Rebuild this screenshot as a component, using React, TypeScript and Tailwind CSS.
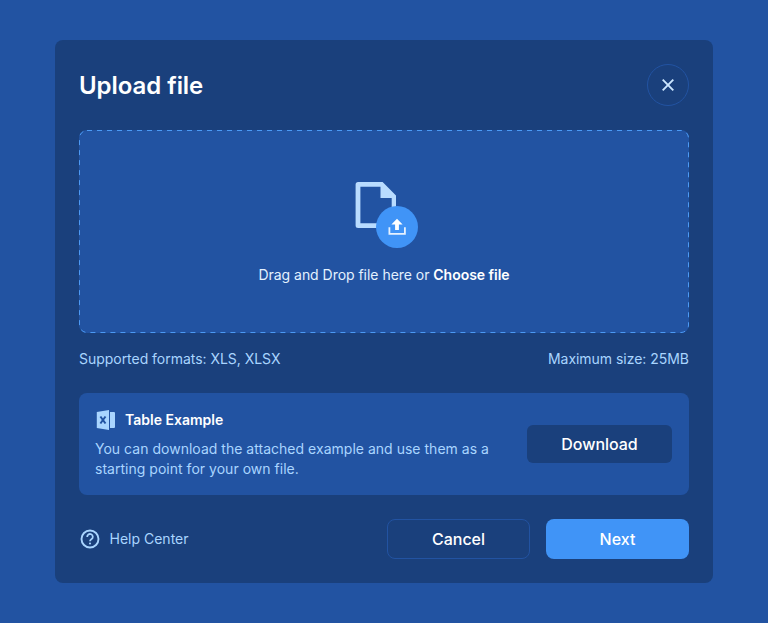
import React from "react";

function UploadIllustration() {
  return (
    <svg className="ml-1.5" width="64" height="67" viewBox="0 0 64 67" fill="none" aria-hidden="true">
      <path
        fillRule="evenodd"
        clipRule="evenodd"
        d="M3.100 0H27.600L41 13.600V46H3.100A2.500 2.500 0 0 1 0.600 43.500V2.500A2.500 2.500 0 0 1 3.100 0ZM5.400 4.800V41.200H36.700V16H25.500V4.800Z"
        fill="#b9dcff"
      />
      <circle cx="42" cy="45" r="21" fill="#4094f7" />
      <path d="M42 36.700L47.600 42.600H43.900V48H40.100V42.600H36.400Z" fill="#fff" />
      <path d="M34.400 45.300V51.900H49.900V45.300" stroke="#e6f2ff" strokeWidth="1.800" />
    </svg>
  );
}

function ExcelIcon() {
  return (
    <svg width="20" height="20" viewBox="0 0 20 20" fill="none" aria-hidden="true">
      <path d="M1.800 2L14 0V20L1.800 18Z" fill="#a9d5ff" />
      <path d="M15 2H19A1 1 0 0 1 20 3V17A1 1 0 0 1 19 18H15Z" fill="#a9d5ff" />
      <path d="M5.400 6.500L10.500 13.500M10.500 6.500L5.400 13.500" stroke="#2253a2" strokeWidth="2" />
    </svg>
  );
}

function HelpIcon() {
  return (
    <svg width="20" height="20" viewBox="0 0 20 20" fill="none" aria-hidden="true">
      <circle cx="10" cy="10" r="8.500" stroke="#a9d5ff" strokeWidth="1.900" />
      <path
        d="M7.200 8A2.800 2.800 0 1 1 11.600 10.100C10.600 10.800 10 11.300 10 12.300"
        stroke="#a9d5ff"
        strokeWidth="1.800"
      />
      <circle cx="10" cy="14.500" r="1.050" fill="#a9d5ff" />
    </svg>
  );
}

function DashedOutline() {
  return (
    <svg className="pointer-events-none absolute inset-0" width="610" height="203" fill="none" aria-hidden="true">
      <rect x="0.500" y="0.500" width="609" height="202" rx="7.500" stroke="#4c9af5" strokeDasharray="5 5" />
    </svg>
  );
}

export default function App() {
  return (
    <main className="flex h-[623px] w-[768px] items-start bg-[#2253a2] pt-10 pl-[55px] font-['Inter',sans-serif]">
      <section className="flex h-[543px] w-[658px] flex-col rounded-lg bg-[#1a407c] p-6">
        <header className="flex h-[42px] items-center justify-between">
          <h1 className="pt-0.5 text-2xl font-semibold tracking-[-0.05px] text-white">Upload file</h1>
          <button
            aria-label="Close"
            className="flex size-[42px] items-center justify-center rounded-full border border-[#2253a2]"
          >
            <svg width="12" height="12" viewBox="0 0 12 12" fill="none">
              <path d="M0.700 0.700L11.300 11.300M11.300 0.700L0.700 11.300" stroke="#cce6ff" strokeWidth="1.900" />
            </svg>
          </button>
        </header>

        <div className="relative mt-6 flex h-[203px] flex-col items-center rounded-lg bg-[#2253a2] pt-[52px]">
          <DashedOutline />
          <UploadIllustration />
          <p className="mt-4 text-sm leading-5 tracking-[-0.03px] text-[#e3f1ff]">
            Drag and Drop file here or <span className="font-semibold text-white">Choose file</span>
          </p>
        </div>

        <div className="mt-4 flex justify-between text-sm leading-5 tracking-[-0.03px] text-[#a9d5ff]">
          <span>Supported formats: XLS, XLSX</span>
          <span>Maximum size: 25MB</span>
        </div>

        <div className="mt-6 flex h-[102px] items-center justify-between rounded-lg bg-[#2253a2] pr-[17px] pl-4">
          <div className="w-[410px]">
            <div className="flex h-5 items-center gap-[10px]">
              <ExcelIcon />
              <h2 className="text-sm font-semibold text-white">Table Example</h2>
            </div>
            <p className="mt-[9px] text-sm leading-5 tracking-[0.02px] text-[#a9d5ff]">
              You can download the attached example and use them as a
              <br />
              starting point for your own file.
            </p>
          </div>
          <button className="h-[38px] w-[145px] rounded-md bg-[#1a407c] text-base font-medium tracking-[-0.02px] text-white">
            Download
          </button>
        </div>

        <footer className="mt-6 flex h-10 items-center">
          <a className="flex items-center gap-[9.5px] pl-px text-sm leading-5 text-[#a9d5ff]">
            <HelpIcon />
            Help Center
          </a>
          <button className="ml-auto h-10 w-[143px] rounded-lg border border-[#2253a2] text-base font-medium text-white">
            Cancel
          </button>
          <button className="ml-4 h-10 w-[143px] rounded-lg bg-[#4094f7] text-base font-medium text-white">
            Next
          </button>
        </footer>
      </section>
    </main>
  );
}
